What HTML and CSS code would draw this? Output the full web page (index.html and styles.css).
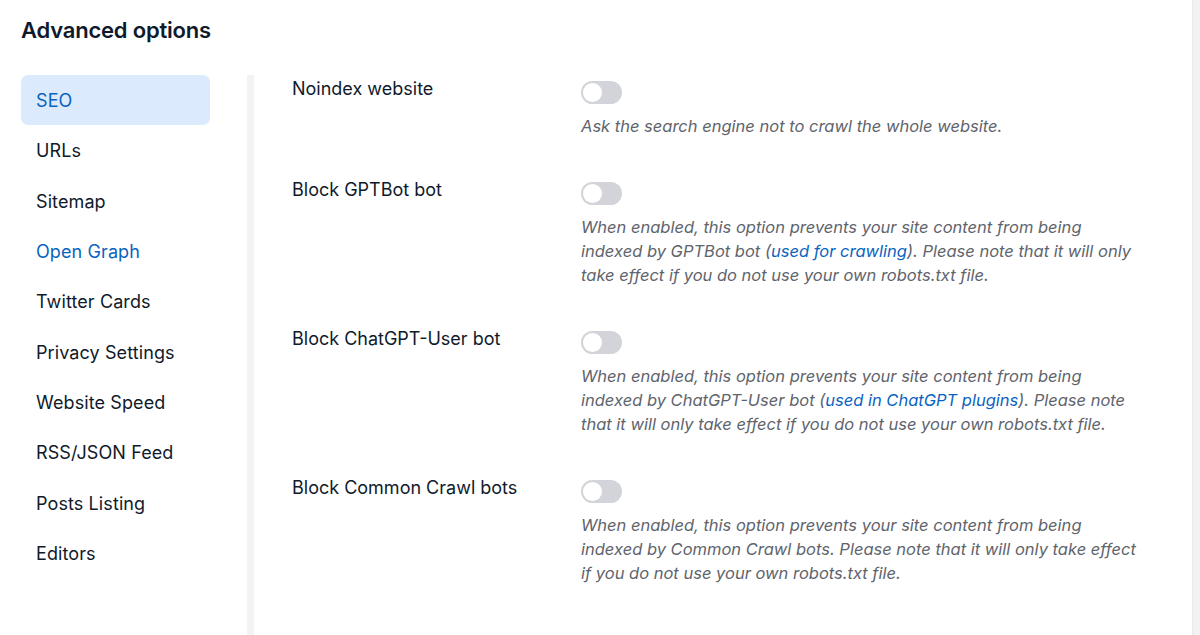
FILE: index.html
```html
<!DOCTYPE html>
<html lang="en">
<head>
<meta charset="utf-8">
<title>Advanced options</title>
<link rel="stylesheet" href="styles.css">
</head>
<body>
<div class="page">
  <div class="panel">
    <h1 class="title">Advanced options</h1>
    <div class="layout">
      <nav class="sidenav">
        <a class="nav-item active">SEO</a>
        <a class="nav-item">URLs</a>
        <a class="nav-item">Sitemap</a>
        <a class="nav-item link">Open Graph</a>
        <a class="nav-item">Twitter Cards</a>
        <a class="nav-item">Privacy Settings</a>
        <a class="nav-item">Website Speed</a>
        <a class="nav-item">RSS/JSON Feed</a>
        <a class="nav-item">Posts Listing</a>
        <a class="nav-item">Editors</a>
      </nav>
      <div class="divider"></div>
      <main class="content">
        <div class="row">
          <div class="label">Noindex website</div>
          <div class="control">
            <span class="toggle"><span class="knob"></span></span>
            <p class="desc">Ask the search engine not to crawl the whole website.</p>
          </div>
        </div>
        <div class="row">
          <div class="label">Block GPTBot bot</div>
          <div class="control">
            <span class="toggle"><span class="knob"></span></span>
            <p class="desc">When enabled, this option prevents your site content from being indexed by GPTBot bot (<a class="desc-link">used for crawling</a>). Please note that it will only take effect if you do not use your own robots.txt file.</p>
          </div>
        </div>
        <div class="row">
          <div class="label">Block ChatGPT-User bot</div>
          <div class="control">
            <span class="toggle"><span class="knob"></span></span>
            <p class="desc">When enabled, this option prevents your site content from being indexed by ChatGPT-User bot (<a class="desc-link">used in ChatGPT plugins</a>). Please note that it will only take effect if you do not use your own robots.txt file.</p>
          </div>
        </div>
        <div class="row">
          <div class="label">Block Common Crawl bots</div>
          <div class="control">
            <span class="toggle"><span class="knob"></span></span>
            <p class="desc">When enabled, this option prevents your site content from being indexed by Common Crawl bots. Please note that it will only take effect if you do not use your own robots.txt file.</p>
          </div>
        </div>
      </main>
    </div>
  </div>
  <div class="edge"></div>
</div>
</body>
</html>
```
FILE: styles.css
```css
* { box-sizing: border-box; }
html, body { margin: 0; padding: 0; height: 100%; }
body {
  background: #ffffff;
  font-family: Inter, "Noto Sans", "Liberation Sans", sans-serif;
  color: #0f1a2b;
  overflow: hidden;
}
.page {
  display: flex;
  height: 635px;
}
.panel {
  flex: 1;
  display: flex;
  flex-direction: column;
  padding-left: 21px;
}
.title {
  margin: 0;
  padding-top: 16px;
  height: 75px;
  font-size: 22px;
  line-height: 28px;
  font-weight: 600;
  letter-spacing: -0.2px;
  color: #0f1a2b;
}
.layout {
  flex: 1;
  display: flex;
}
.sidenav {
  width: 189px;
  display: flex;
  flex-direction: column;
  gap: 0.33px;
}
.nav-item {
  display: block;
  height: 50px;
  padding: 14px 15px 12px;
  font-size: 18px;
  line-height: 24px;
  letter-spacing: 0.1px;
  color: #0f1a2b;
  border-radius: 7px;
  text-decoration: none;
}
.nav-item.active {
  background: #dbeafc;
  color: #0b63c0;
}
.nav-item.link { color: #0b63c0; }
.divider {
  width: 7px;
  margin-left: 37px;
  background: #f3f3f6;
}
.content {
  flex: 1;
  padding-left: 38px;
  padding-top: 2px;
  display: flex;
  flex-direction: column;
  gap: 40px;
}
.row {
  display: flex;
}
.label {
  width: 289px;
  flex: none;
  font-size: 18px;
  line-height: 24px;
  color: #0f1a2b;
}
.control {
  flex: 1;
  padding-top: 4px;
}
.toggle {
  display: block;
  width: 41px;
  height: 23px;
  border-radius: 12px;
  background: #d3d4d9;
  position: relative;
}
.knob {
  position: absolute;
  left: 2px;
  top: 2px;
  width: 19px;
  height: 19px;
  border-radius: 50%;
  background: #ffffff;
}
.desc {
  margin: 10px 0 0 0;
  max-width: 562px;
  font-size: 16.5px;
  line-height: 24px;
  font-style: italic;
  color: #60646c;
}
.desc-link {
  color: #0b63c0;
  text-decoration: none;
}
.edge {
  width: 8px;
  flex: none;
  background: #f2f2f4;
  border-left: 1px solid #e9e9ec;
}
```
